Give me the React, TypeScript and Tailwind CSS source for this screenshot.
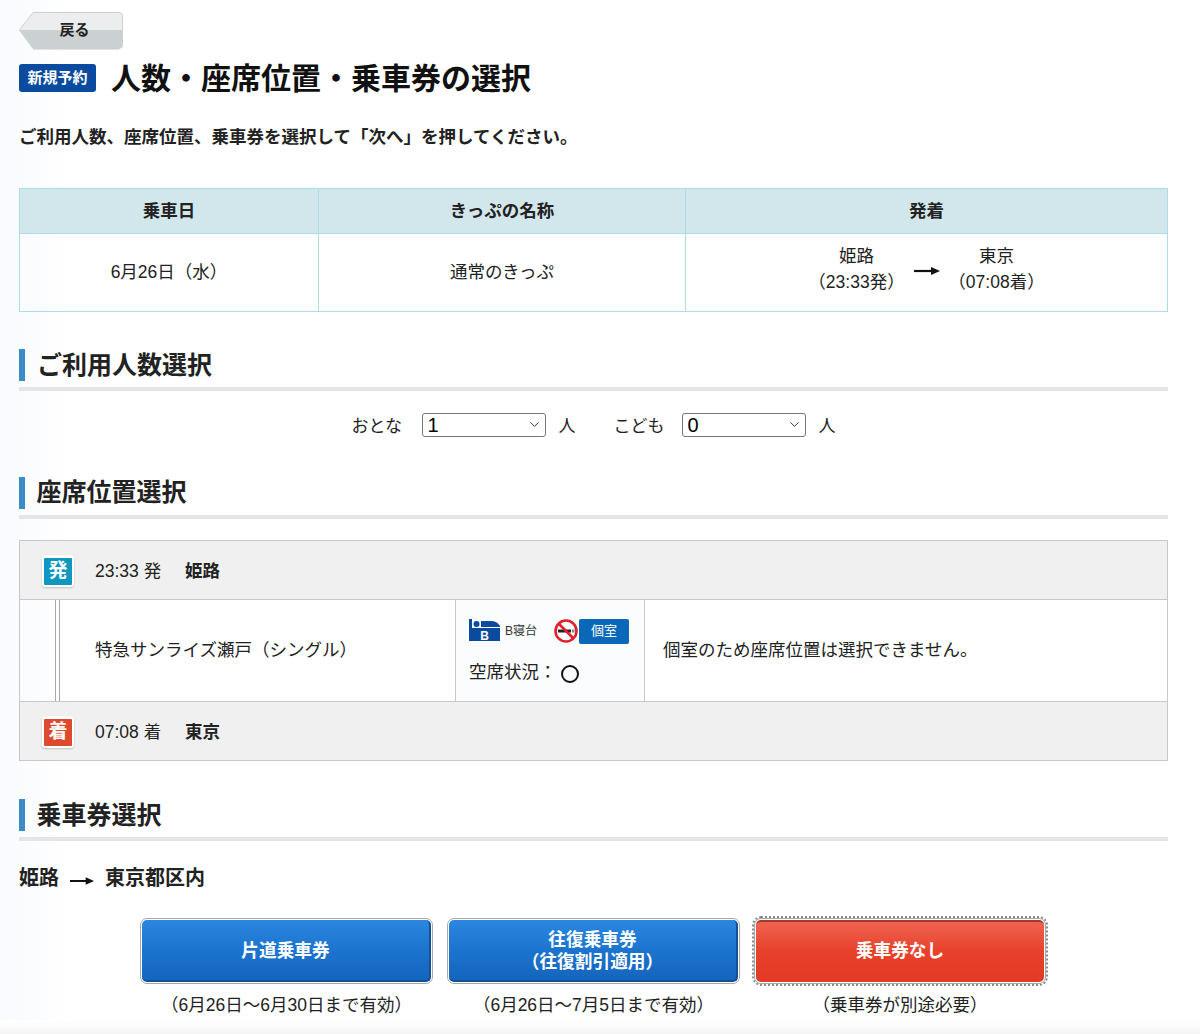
import { ChevronDown } from "lucide-react";

const FONT = "font-['Liberation_Sans','Noto_Sans_CJK_JP',sans-serif]";

function Arrow({ width = 26 }: { width?: number }) {
  return (
    <svg width={width} height="10" viewBox="0 0 26 10" className="shrink-0">
      <path d="M0 5h19" stroke="#111" strokeWidth="2.2" />
      <path d="M17 1L26 5l-9 4z" fill="#111" />
    </svg>
  );
}

function SectionTitle({ children, text }: { children: React.ReactNode; text: string }) {
  return (
    <div className="border-b-4 border-[#e5e5e5] pb-[6px]">
      <h2 className={`h-[32px] border-l-[6px] border-[#3d8ac9] text-[25px] font-bold text-[#222] ${text}`}>
        {children}
      </h2>
    </div>
  );
}

function StationRow({ kind, time, name }: { kind: "dep" | "arr"; time: string; name: string }) {
  const isDep = kind === "dep";
  return (
    <div className="flex h-[58px] items-center bg-[#f0f0f0] pt-[2px] pl-[22px] text-[17.5px] text-[#222]">
      <span className="flex h-[32px] w-[32px] items-center justify-center rounded-[3px] bg-white shadow-[0_1px_2px_rgba(0,0,0,0.2)]">
        <span className={`flex h-[27px] w-[28px] items-center justify-center rounded-[1px] text-[19px] font-bold text-white ${isDep ? "bg-[#0f97bf]" : "bg-[#dd4a2f]"}`}>
          {isDep ? "発" : "着"}
        </span>
      </span>
      <span className="ml-[21px] w-[90px]">{time}</span>
      <span className="font-bold">{name}</span>
    </div>
  );
}

function TicketButton({ label, note, tone, width }: { label: string[]; note: string; tone: "blue" | "red"; width: string }) {
  const isBlue = tone === "blue";
  return (
    <div className={`flex flex-col items-center ${width}`}>
      <button
        className={`block h-[66px] w-full rounded-[7px] border border-[#a4a9ae] p-[1px] ${
          isBlue ? "" : "outline-2 outline-[#8a8a8a] outline-dotted"
        }`}
      >
        <span
          className={`flex h-full w-full flex-col items-center justify-center rounded-[5px] text-[17.7px] leading-[22px] font-bold text-white ${
            isBlue
              ? "border-r-2 border-b-2 border-[#154f96] bg-[linear-gradient(#2a87e0,#1c74cf_50%,#1565bd)] pt-[2px]"
              : "border-t-2 border-[#a33c2c] bg-[linear-gradient(#ef6350,#e8412b_50%,#e23a24)] pb-[2px]"
          }`}
        >
          {label.map((line) => (
            <span key={line}>{line}</span>
          ))}
        </span>
      </button>
      <p className="mt-[9px] text-[17.5px] leading-[24px] whitespace-nowrap text-[#222]">{note}</p>
    </div>
  );
}

function PersonSelect({ label, value, labelWidth }: { label: string; value: string; labelWidth: string }) {
  return (
    <div className="flex items-center text-[17px] leading-[21px] text-[#222]">
      <span className={`pt-[3px] whitespace-nowrap ${labelWidth}`}>{label}</span>
      <div className="relative mr-[13px] ml-[19px] h-[24px] w-[124px]">
        <select
          defaultValue={value}
          className="h-full w-full appearance-none rounded-[3px] border border-[#767676] bg-white pl-[5px] text-[20px] leading-[22px] text-black"
        >
          <option>0</option>
          <option>1</option>
          <option>2</option>
        </select>
        <ChevronDown size={15} strokeWidth={1.6} className="pointer-events-none absolute top-[4px] right-[4px] text-[#333]" />
      </div>
      <span className="pt-[3px]">人</span>
    </div>
  );
}

export default function App() {
  return (
    <div className={`${FONT} h-[1034px] overflow-hidden bg-[linear-gradient(to_right,#f8fafd,#ffffff_70px)]`}>
      <div className="h-[1020px] pr-[32px] pl-[18px]">
        {/* back button */}
        <div className="pt-[12px]">
          <button className="relative ml-[1px] block h-[37px] w-[105px] pb-[1px] pl-[6px]">
            <svg width="105" height="38" viewBox="0 0 105 38" className="absolute inset-0">
              <path d="M14 .5h86a3.5 3.5 0 0 1 3.5 3.5v29a3.5 3.5 0 0 1-3.5 3.5H14L.5 18z" fill="#cbd0d3" stroke="#cfcfcf" />
              <path d="M14 1h86a3 3 0 0 1 3 3v14H1z" fill="#ebedee" />
              <path d="M14 37.5h86" stroke="#e2e2e2" />
            </svg>
            <span className="relative text-[15px] font-bold text-[#222]">戻る</span>
          </button>
        </div>

        {/* title */}
        <div className="mt-[14px] flex items-center">
          <span className="ml-[1px] flex h-[28px] w-[77px] items-center justify-center rounded-[3px] bg-[#0a4a9f] text-[15px] font-bold text-white">
            新規予約
          </span>
          <h1 className="ml-[15px] h-[30px] text-[30px] leading-[32px] font-bold text-[#111]">人数・座席位置・乗車券の選択</h1>
        </div>
        <p className="mt-[32px] ml-[1px] text-[17.5px] leading-[24px] font-bold text-[#222]">
          ご利用人数、座席位置、乗車券を選択して「次へ」を押してください。
        </p>

        {/* journey summary */}
        <table className="mt-[39px] ml-[1px] w-[1149px] table-fixed border-collapse border border-[#aedbe5] text-center text-[17.5px] text-[#222]">
          <colgroup>
            <col className="w-[299px]" />
            <col className="w-[367px]" />
            <col />
          </colgroup>
          <thead>
            <tr className="h-[45px] bg-[#d2e7ec] font-bold">
              <th className="border border-[#aedbe5]">乗車日</th>
              <th className="border border-[#aedbe5]">きっぷの名称</th>
              <th className="border border-[#aedbe5]">発着</th>
            </tr>
          </thead>
          <tbody>
            <tr className="h-[78px]">
              <td className="border border-[#aedbe5]">6月26日（水）</td>
              <td className="border border-[#aedbe5]">通常のきっぷ</td>
              <td className="border border-[#aedbe5]">
                <div className="flex items-center justify-center pb-[4px] leading-[26px]">
                  <div className="mb-[4px] w-[114px]">姫路<br />（23:33発）</div>
                  <Arrow />
                  <div className="mb-[4px] w-[114px]">東京<br />（07:08着）</div>
                </div>
              </td>
            </tr>
          </tbody>
        </table>

        {/* passenger count */}
        <div className="mt-[37px] ml-[1px]">
          <SectionTitle text="pl-[12px] leading-[32px]">ご利用人数選択</SectionTitle>
        </div>
        <div className="mt-[22px] flex justify-center gap-[38px] pl-[1px]">
          <PersonSelect label="おとな" value="1" labelWidth="w-[51px]" />
          <PersonSelect label="こども" value="0" labelWidth="w-[49px]" />
        </div>

        {/* seat position */}
        <div className="mt-[40px] ml-[1px]">
          <SectionTitle text="pl-[11.5px] leading-[30px]">座席位置選択</SectionTitle>
        </div>
        <div className="mt-[21px] ml-[1px] border border-[#c8c8c8]">
          <StationRow kind="dep" time="23:33 発" name="姫路" />
          <div className="flex h-[103px] border-y border-[#c8c8c8] text-[17.5px] text-[#222]">
            <div className="ml-[35px] w-[5px] border-x border-[#a8a8a8]" />
            <div className="flex w-[395px] items-center pl-[35px]">特急サンライズ瀬戸（シングル）</div>
            <div className="w-[190px] border-x border-[#c8c8c8] bg-[#fbfcfe] pt-[18px] pl-[13px]">
              <div className="flex h-[26px] items-center">
                <svg width="31" height="22" viewBox="0 0 31 22" className="mb-[3px] shrink-0">
                  <path d="M0 0h3v9h28v13H0z" fill="#0a4a9f" />
                  <circle cx="7.5" cy="5" r="3" fill="#0a4a9f" />
                  <path d="M12 2h10q6 0 9 5v1H12z" fill="#0a4a9f" />
                  <text x="15.5" y="20.5" textAnchor="middle" fill="#fff" fontSize="12" fontWeight="700" fontFamily="'Liberation Sans',sans-serif">B</text>
                </svg>
                <span className="ml-[5px] text-[12px] text-[#333]">B寝台</span>
                <svg width="24" height="24" viewBox="0 0 24 24" className="ml-[17px] shrink-0">
                  <circle cx="12" cy="12" r="10.5" fill="#fff" />
                  <path d="M4 10.5h13v3H4z" fill="#222" />
                  <path d="M18 10.5h2.5v3H18z" fill="#888" />
                  <circle cx="12" cy="12" r="10.5" fill="none" stroke="#e0202c" strokeWidth="2.6" />
                  <path d="M4.5 4.5l15 15" stroke="#e0202c" strokeWidth="2.6" />
                </svg>
                <span className="ml-[1px] flex h-[25px] w-[50px] items-center justify-center rounded-[2px] bg-[#0a68b8] text-[13px] text-white">個室</span>
              </div>
              <div className="mt-[15px] flex items-center">
                <span>空席状況：</span>
                <span className="mt-[4px] ml-[4px] h-[18px] w-[18px] rounded-full border-2 border-[#111]" />
              </div>
            </div>
            <div className="flex flex-1 items-center pl-[18px]">個室のため座席位置は選択できません。</div>
          </div>
          <StationRow kind="arr" time="07:08 着" name="東京" />
        </div>

        {/* ticket */}
        <div className="mt-[38px] ml-[1px]">
          <SectionTitle text="pl-[11.5px] leading-[32px]">乗車券選択</SectionTitle>
        </div>
        <div className="mt-[24px] ml-[1px] flex items-center text-[20px] leading-[26px] font-bold text-[#222]">
          <span>姫路</span>
          <span className="mx-[11px] pt-[6px]"><Arrow width={24} /></span>
          <span>東京都区内</span>
        </div>
        <div className="mt-[27px] flex pl-[122px]">
          <TicketButton tone="blue" width="w-[293px]" label={["片道乗車券"]} note="（6月26日～6月30日まで有効）" />
          <TicketButton tone="blue" width="ml-[14px] w-[293px]" label={["往復乗車券", "（往復割引適用）"]} note="（6月26日～7月5日まで有効）" />
          <TicketButton tone="red" width="ml-[14px] w-[292px]" label={["乗車券なし"]} note="（乗車券が別途必要）" />
        </div>
      </div>
      <div className="h-[14px] bg-[linear-gradient(#ffffff,#f5f5f5)]" />
    </div>
  );
}
